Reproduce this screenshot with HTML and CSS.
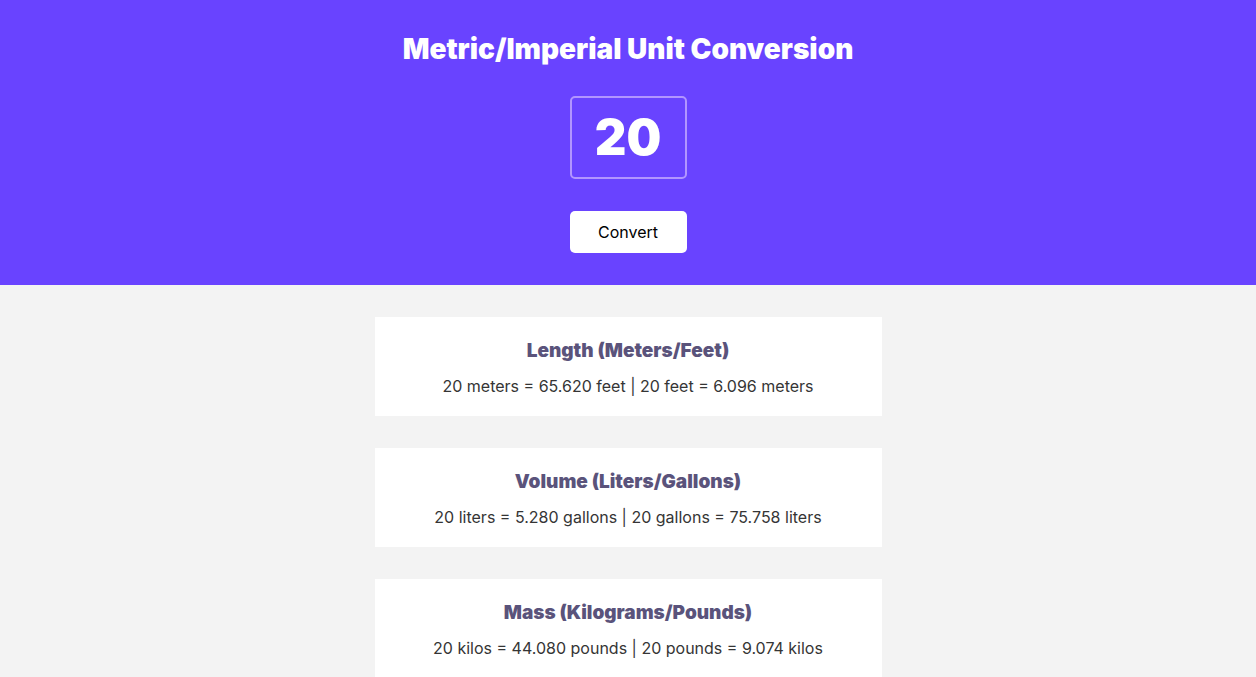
FILE: index.html
```html
<!DOCTYPE html>
<html lang="en">
<head>
<meta charset="utf-8">
<meta name="viewport" content="width=device-width, initial-scale=1">
<title>Metric/Imperial Unit Conversion</title>
<link rel="stylesheet" href="styles.css">
</head>
<body>
<header class="converter">
  <h1 class="title">Metric/Imperial Unit Conversion</h1>
  <form class="form">
    <input class="amount" type="text" inputmode="numeric" value="20" aria-label="Value to convert">
    <button class="convert" type="button">Convert</button>
  </form>
</header>
<main class="results">
  <section class="card">
    <h2 class="card-title">Length (Meters/Feet)</h2>
    <p class="card-text">20 meters = 65.620 feet | 20 feet = 6.096 meters</p>
  </section>
  <section class="card">
    <h2 class="card-title">Volume (Liters/Gallons)</h2>
    <p class="card-text">20 liters = 5.280 gallons | 20 gallons = 75.758 liters</p>
  </section>
  <section class="card">
    <h2 class="card-title">Mass (Kilograms/Pounds)</h2>
    <p class="card-text">20 kilos = 44.080 pounds | 20 pounds = 9.074 kilos</p>
  </section>
</main>
</body>
</html>
```

FILE: styles.css
```css
* {
  box-sizing: border-box;
}

body {
  margin: 0;
  background: #f3f3f3;
  color: #353535;
  font-family: Inter, "Liberation Sans", sans-serif;
  text-align: center;
}

.converter {
  padding: 32px;
  background: #6943ff;
}

.title {
  margin: 0 0 30px;
  color: #fff;
  font-size: 28px;
  font-weight: 900;
  line-height: 34px;
}

.form {
  display: flex;
  flex-direction: column;
  align-items: center;
  gap: 32px;
}

.amount {
  width: 117px;
  height: 83px;
  padding: 0;
  border: 2px solid #b295ff;
  border-radius: 5px;
  background: transparent;
  color: #fff;
  font: 900 49px Inter, "Liberation Sans", sans-serif;
  text-align: center;
}

.convert {
  width: 117px;
  height: 42px;
  padding: 0;
  border: 0;
  border-radius: 5px;
  background: #fff;
  color: #000;
  font: 400 16px Inter, "Liberation Sans", sans-serif;
}

.results {
  display: flex;
  flex-direction: column;
  gap: 32px;
  max-width: 507px;
  margin: 0 auto;
  padding: 32px 0;
}

.card {
  padding: 24px 16px 20px;
  background: #fff;
}

.card-title {
  margin: 0 0 15px;
  color: #5a537b;
  font-size: 19px;
  font-weight: 900;
  line-height: 20px;
}

.card-text {
  margin: 0;
  font-size: 16px;
  line-height: 20px;
}
```
